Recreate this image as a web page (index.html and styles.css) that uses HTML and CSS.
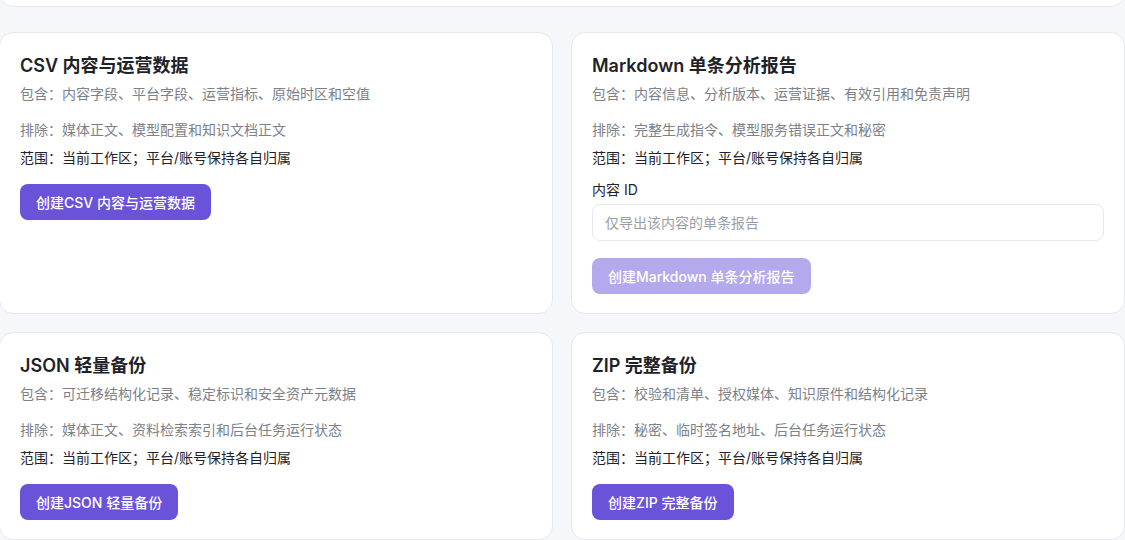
FILE: index.html
```html
<!DOCTYPE html>
<html lang="zh-CN">
<head>
  <meta charset="UTF-8">
  <meta name="viewport" content="width=device-width, initial-scale=1.0">
  <title>导出与备份</title>
  <link rel="stylesheet" href="styles.css">
</head>
<body>
  <div class="page">
    <div class="top-card"></div>

    <div class="export-grid">
      <section class="card">
        <h3 class="card-title">CSV 内容与运营数据</h3>
        <p class="meta include">包含：内容字段、平台字段、运营指标、原始时区和空值</p>
        <p class="meta exclude">排除：媒体正文、模型配置和知识文档正文</p>
        <p class="meta scope">范围：当前工作区；平台/账号保持各自归属</p>
        <div class="actions">
          <button class="btn">创建CSV 内容与运营数据</button>
        </div>
      </section>

      <section class="card">
        <h3 class="card-title">Markdown 单条分析报告</h3>
        <p class="meta include">包含：内容信息、分析版本、运营证据、有效引用和免责声明</p>
        <p class="meta exclude">排除：完整生成指令、模型服务错误正文和秘密</p>
        <p class="meta scope">范围：当前工作区；平台/账号保持各自归属</p>
        <label class="field">
          <span class="field-label">内容 ID</span>
          <input class="input" type="text" placeholder="仅导出该内容的单条报告">
        </label>
        <div class="actions">
          <button class="btn" disabled>创建Markdown 单条分析报告</button>
        </div>
      </section>

      <section class="card">
        <h3 class="card-title">JSON 轻量备份</h3>
        <p class="meta include">包含：可迁移结构化记录、稳定标识和安全资产元数据</p>
        <p class="meta exclude">排除：媒体正文、资料检索索引和后台任务运行状态</p>
        <p class="meta scope">范围：当前工作区；平台/账号保持各自归属</p>
        <div class="actions">
          <button class="btn">创建JSON 轻量备份</button>
        </div>
      </section>

      <section class="card">
        <h3 class="card-title">ZIP 完整备份</h3>
        <p class="meta include">包含：校验和清单、授权媒体、知识原件和结构化记录</p>
        <p class="meta exclude">排除：秘密、临时签名地址、后台任务运行状态</p>
        <p class="meta scope">范围：当前工作区；平台/账号保持各自归属</p>
        <div class="actions">
          <button class="btn">创建ZIP 完整备份</button>
        </div>
      </section>
    </div>
  </div>
</body>
</html>
```

FILE: styles.css
```css
:root {
  --bg: #f6f7fb;
  --card: #ffffff;
  --border: #e6e8ee;
  --text: #1f2329;
  --muted: #7d8189;
  --primary: #6a52d9;
  --primary-disabled: #b4a9ec;
  --radius: 14px;
}
* {
  box-sizing: border-box;
}
body {
  margin: 0;
  background: var(--bg);
  color: var(--text);
  font-family: Inter, "Noto Sans CJK SC", sans-serif;
  overflow: hidden;
}
.page {
  width: 1126px;
  margin-left: -1px;
}
.top-card {
  height: 47px;
  margin-top: -40px;
  background: var(--card);
  border: 1px solid var(--border);
  border-radius: var(--radius);
}
.export-grid {
  display: grid;
  grid-template-columns: 1fr 1fr;
  column-gap: 18px;
  row-gap: 18px;
  margin-top: 25px;
}
.card {
  background: var(--card);
  border: 1px solid var(--border);
  border-radius: var(--radius);
  padding: 19px 20px 19px 20px;
  display: flex;
  flex-direction: column;
}
.card-title {
  margin: 0;
  font-size: 18px;
  font-weight: 600;
  line-height: 28px;
  color: var(--text);
}
.meta {
  margin: 0;
  font-size: 14px;
  line-height: 20px;
}
.include {
  margin-top: 4px;
  color: var(--muted);
}
.exclude {
  margin-top: 16px;
  color: var(--muted);
}
.scope {
  margin-top: 8px;
  color: var(--text);
}
.field {
  display: flex;
  flex-direction: column;
  margin-top: 12px;
}
.field-label {
  font-size: 14px;
  line-height: 20px;
  color: var(--text);
}
.input {
  margin-top: 4px;
  height: 37px;
  border: 1px solid var(--border);
  border-radius: 8px;
  padding: 0 12px;
  font-family: inherit;
  font-size: 14px;
  color: var(--text);
  outline: none;
}
.input::placeholder {
  color: #9a9ea6;
}
.actions {
  margin-top: 16px;
  display: flex;
}
.field + .actions {
  margin-top: 17px;
}
.btn {
  height: 36px;
  padding: 0 16px;
  border: none;
  border-radius: 8px;
  background: var(--primary);
  color: #fff;
  font-family: inherit;
  font-size: 14px;
  font-weight: 500;
  cursor: pointer;
}
.btn:disabled {
  background: var(--primary-disabled);
  cursor: not-allowed;
}
```
